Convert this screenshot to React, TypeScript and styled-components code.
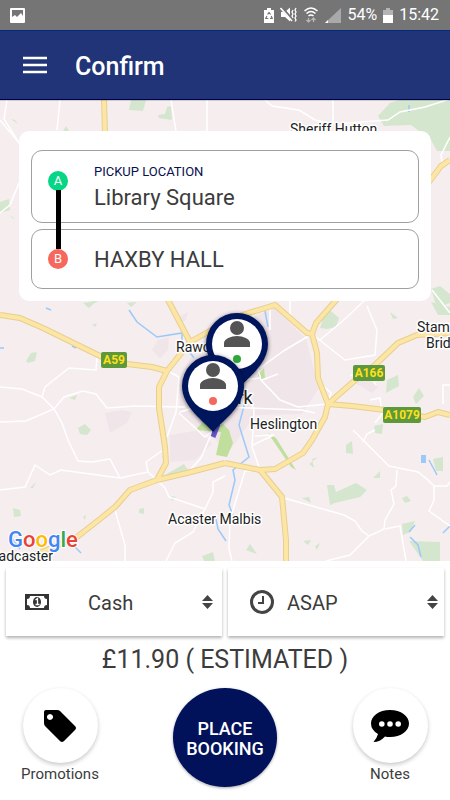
import React from "react";
import styled, { createGlobalStyle } from "styled-components";

const GlobalStyle = createGlobalStyle`
  *, *::before, *::after { box-sizing: border-box; }
  body { margin: 0; background: #fff; font-family: Roboto, "Liberation Sans", sans-serif; color: #3c3c3c; }
  button, select { font-family: inherit; color: inherit; }
`;

const Screen = styled.div`
  display: flex;
  flex-direction: column;
  min-height: 100vh;
`;

const StatusBar = styled.div`
  display: flex;
  align-items: center;
  justify-content: space-between;
  height: 30px;
  padding: 0 11px 0 10px;
  background: #757575;
  color: #fff;
  font-size: 16px;
  line-height: 30px;
`;

const StatusGroup = styled.div`
  display: flex;
  align-items: center;
  gap: 6px;
`;

const Header = styled.header`
  display: flex;
  align-items: center;
  gap: 28px;
  height: 70px;
  padding: 0 23px;
  background: #213478;
  border-top: 1px solid #022a80;
  border-bottom: 1px solid #000052;
  color: #fff;
`;

const MenuButton = styled.button`
  display: flex;
  padding: 0;
  border: 0;
  background: none;
`;

const Title = styled.h1`
  margin: 0;
  padding-top: 3px;
  font-size: 25px;
  line-height: 32px;
  font-weight: 500;
`;

const MapSection = styled.main`
  position: relative;
  flex: 1;
  min-height: 300px;
  padding: 31px 19px;
  background: #f6edef;
  overflow: hidden;
`;

const MapCanvas = styled.svg`
  position: absolute;
  inset: 0;
  width: 100%;
  height: 100%;
`;

const RouteCard = styled.section`
  position: relative;
  display: flex;
  flex-direction: column;
  gap: 6px;
  padding: 19px 12px 12px;
  border-radius: 10px;
  background: #fff;
`;

const RouteStop = styled.button<{ $tall?: boolean }>`
  display: flex;
  align-items: ${(p) => (p.$tall ? "flex-start" : "center")};
  gap: 26px;
  height: ${(p) => (p.$tall ? 73 : 60)}px;
  padding: ${(p) => (p.$tall ? "12px" : "0")} 16px 0;
  border: 1px solid #a0a0a0;
  border-radius: 11px;
  background: #fff;
  text-align: left;
`;

const StopBadge = styled.span<{ $color: string; $linked?: boolean }>`
  position: relative;
  display: flex;
  align-items: center;
  justify-content: center;
  width: 20px;
  height: 20px;
  margin-top: ${(p) => (p.$linked ? 8 : 0)}px;
  border-radius: 50%;
  background: ${(p) => p.$color};
  color: #fff;
  font-size: 13px;
  line-height: 20px;

  &::after {
    content: "";
    display: ${(p) => (p.$linked ? "block" : "none")};
    position: absolute;
    z-index: 1;
    top: 19px;
    left: 8px;
    width: 5px;
    height: 59px;
    background: #000;
  }
`;

const StopText = styled.span`
  display: flex;
  flex-direction: column;
`;

const StopLabel = styled.span`
  color: #08104e;
  font-size: 13px;
  line-height: 18px;
`;

const StopName = styled.span`
  padding-top: 2px;
  font-size: 22px;
  line-height: 30px;
`;

const Options = styled.div`
  display: grid;
  grid-template-columns: 1fr 1fr;
  gap: 6px;
  padding: 7px 6px 0;
`;

const OptionCard = styled.label<{ $gap: number; $inset: number; $end: number }>`
  display: flex;
  align-items: center;
  height: 68px;
  padding: 0 ${(p) => p.$end}px 0 ${(p) => p.$inset}px;
  background: #fff;
  box-shadow: 0 2px 3px rgba(0, 0, 0, 0.3);

  select {
    margin-left: ${(p) => p.$gap}px;
  }
`;

const OptionSelect = styled.select`
  flex: 1;
  min-width: 0;
  height: 100%;
  padding: 2px 0 0;
  border: 0;
  background: none;
  appearance: none;
  font-size: 20px;
`;

const Price = styled.p`
  margin: 0;
  padding-top: 8px;
  font-size: 25px;
  line-height: 32px;
  text-align: center;
`;

const Actions = styled.div`
  display: flex;
  align-items: flex-start;
  justify-content: space-between;
  padding: 12px 15px 13px;
`;

const RoundAction = styled.button`
  display: flex;
  flex-direction: column;
  align-items: center;
  width: 90px;
  padding: 0;
  border: 0;
  background: none;
  font-size: 15px;
  line-height: 22px;
`;

const RoundFace = styled.span`
  display: flex;
  align-items: center;
  justify-content: center;
  width: 75px;
  height: 75px;
  border-radius: 50%;
  background: #fff;
  box-shadow: 0 2px 4px rgba(0, 0, 0, 0.22);
`;

const BookButton = styled.button`
  width: 104px;
  height: 99px;
  padding: 2px 0 0;
  border: 0;
  border-radius: 50%;
  background: #01125b;
  box-shadow: 0 1px 3px rgba(0, 0, 0, 0.35);
  color: #fff;
  font-size: 18px;
  font-weight: 500;
  line-height: 20px;
`;

const StatusIcons = () => (
  <>
    <svg width="10" height="15" viewBox="0 0 10 15" aria-hidden="true">
      <path d="M3 0h4v2h3v13H0V2h3z" fill="#fff" />
      <path d="M3.5 6.5 5 4.5l1.6 2M7.3 8l.9 2.4H6M4.3 10.5H1.8L2.9 8" fill="none" stroke="#757575" strokeWidth="1.2" />
    </svg>
    <svg width="17" height="16" viewBox="0 0 17 16" aria-hidden="true">
      <path d="M1 5h4l5-4.500v14L5 10H1z" fill="#fff" />
      <path d="M1.500 .500 12.500 13" stroke="#757575" strokeWidth="3" />
      <path d="M.500 1 12 14" stroke="#fff" strokeWidth="1.600" />
      <path d="m13 3-1 2 1 2-1 2 1 2M16 1l-1 2 1 2-1 2 1 2-1 2 1 2-1 1.500" fill="none" stroke="#fff" strokeWidth="1.3" />
    </svg>
    <svg width="16" height="16" viewBox="-3 0 16 16" aria-hidden="true">
      <path d="M-1.500 4Q5-2 11.500 4M.5 6.500q4.500-4 9 0M2.500 9Q5 7 7.500 9" fill="none" stroke="#fff" strokeWidth="1.6" />
      <path d="M2.500 15v-4M.500 13l2 2 2-2M7.500 15v-4M5.500 13l2-2 2 2" fill="none" stroke="#bbb" strokeWidth="1.2" />
    </svg>
    <svg width="16" height="15" viewBox="0 0 16 15" aria-hidden="true">
      <path d="M0 15 16 0v15z" fill="#a9a9a9" />
      <path d="m0 15 3-3v3z" fill="#fff" />
    </svg>
  </>
);

const minorRoads = [
  "M7 100 4 119 18 141M60 100 57 130M171 100 176 131M207 100V131M0 213 10 205 19 183M0 120 25 150",
  "M265 100 272 106 299 110 315 120 334 124 388 120 400 112 425 107 450 99M333 100V124",
  "M450 137 441 155 443 168M432 290 450 313",
  "M0 387 22 389 42 397 54 409 62 423 68 440 78 461 92 462 110 459 120 478M42 397 45 387 69 368 96 370 97 358",
  "M0 422 26 421 54 409 64 397 83 391 96 394 107 408 135 406 185 407",
  "M0 490 25 487 35 465 50 475 61 470 120 478 148 472 146 462 163 450",
  "M115 510 125 545 125 561",
  "M168 371 179 377 176 412 167 437M179 413 205 437 225 420M203 405 180 412",
  "M148 472 165 488 169 497 205 509 213 492 213 482 225 476M205 509 193 532 175 543 166 561M213 430 201 458 190 470",
  "M253 315 265 348 225 385M245 320 261 380 280 400 298 407 328 404M225 407 302 410 315 413M242 380 261 378",
  "M312 334 285 350 260 368M312 334 345 360 375 355 377 330 367 306M320 340 345 319 365 300M317 380 331 393 328 404M262 380 278 374",
  "M240 315 235 337M270 308 270 330M290 300 290 319M249 395 254 411 252 447 259 467",
  "M353 430 389 466 418 472 428 480 434 486H447L450 482M363 442 367 434 375 430M397 470 396 486 391 490 394 504 385 520 384 529 369 536 350 555 326 561",
  "M284 498 344 515 355 521 362 531 369 536M385 529 400 526 406 561M434 486V500L429 511 450 526",
  "M260 470 245 471 230 520 229 549 232 561M253 445 274 435 255 436",
  "M370 400 380 398 382 414 375 423M450 385H443V404M350 375 370 374 376 385",
];

const mainRoads = [
  "M104 98 105 135M190 342 168 300 160 285",
  "M0 315 20 318 43 328 100 356 127 364 152 367 167 371 190 342 208 332 242 315 275 305 307 333 312 334 317 353 318 378 328 404 325 417 312 440 303 453 275 469 260 470 225 463",
  "M312 334 316 323 338 298",
  "M167 371 159 387 159 408 165 447 166 463 157 480",
  "M35 555 77 537 100 519 115 507 130 490 157 480 187 473 225 463",
  "M260 470 282 497 286 540 286 563",
  "M328 404 353 382 375 365 398 343 417 335 450 333",
  "M328 404 352 406 385 410 425 417 438 412 450 415",
  "M450 160 441 166 429 182",
];

const woods = [
  "M131 100H146L143 111 129 110zM158 115 165 114 167 107 171 106 172 120 159 118zM63 131 66 126 69 131zM11 119 18 124 15 120z",
  "M378 116 390 103 402 99H450V151H437L431 140 411 125 384 126z",
  "M0 202 9 199 10 210 0 213zM10 215 15 219 12 218zM83 303 100 300 88 307zM127 303 137 302 131 307z",
  "M26 361 31 353 37 352 35 361 28 363zM78 428 85 424 91 430 87 435 80 434zM69 398 77 395 75 400z",
  "M85 305 94 303 89 308zM92 325 97 323 95 327z",
  "M320 328 325 313 331 311 339 318 336 327 327 329z",
  "M390 312 398 318 393 319zM431 302 450 307V315L438 315zM387 380 398 375 399 386 386 393zM413 397 419 388 424 396 416 404zM374 426 383 424 382 434 375 433z",
  "M327 485 334 485 336 492 356 483 367 490 360 497 335 503 330 505z",
  "M402 524 415 521 410 532 403 535zM409 541 440 542V561H423z",
  "M346 445 352 441 353 454 346 453zM309 464 314 468 312 459 318 457zM302 498 309 497 311 503zM402 498 407 496 411 501 405 503zM373 478 380 471 380 478z",
  "M433 459 443 457 443 471 436 471zM303 541 311 540 308 545zM315 546 320 543 317 550zM246 550 250 544 257 554z",
  "M13 508 20 510 21 516 14 517zM48 525 54 516 50 522zM30 488 36 482 33 488zM83 517 86 515 85 520zM139 509 144 508 144 514 139 513z",
  "M79 430 90 430 86 435zM165 475 184 464 188 470 164 480zM202 556 213 552 215 561H204zM431 289 440 286 450 294V303L437 308zM171 496 176 497 172 501z",
];

const Pin = ({ x, y, dot }: { x: number; y: number; dot: string }) => (
  <g transform={`translate(${x} ${y})`}>
    <path d="M0 46C-8 36-31 21-31 0A31 31 0 1 1 31 0C31 21 8 36 0 46z" fill="#00145b" filter="url(#pinShadow)" />
    <circle r="25" fill="#fff" />
    <circle cy="-16" r="7" fill="#545454" />
    <path d="M-13 3V-1C-13-5-6-8 0-8S13-5 13-1V3z" fill="#545454" />
    <circle cy="15" r="4" fill={dot} />
  </g>
);

const RoadSign = ({ x, y, w, name }: { x: number; y: number; w: number; name: string }) => (
  <g>
    <rect x={x} y={y} width={w} height="16" rx="2" fill="#5d993b" />
    <text x={x + w / 2} y={y + 12} textAnchor="middle" fontSize="12" fontWeight="700" fill="#ffdf1b">{name}</text>
  </g>
);

const TownMap = () => (
  <MapCanvas viewBox="0 100 450 461" preserveAspectRatio="xMidYMid slice" role="img" aria-label="Route map">
    <defs>
      <filter id="pinShadow" x="-30%" y="-30%" width="160%" height="160%">
        <feDropShadow dx="0" dy="1" stdDeviation="2" floodOpacity="0.6" />
      </filter>
    </defs>
    <path d="M152 350 158 340 169 337 168 350 160 358zM178 317 188 312 186 320 180 323zM250 318 275 308 306 339 319 388 302 414 255 415 230 450 180 415 179 378 195 350zM105 413 122 410 132 412 127 423 110 433zM170 435 200 430 212 444 195 460 170 462zM355 383 367 379 378 387 372 393z" fill="#f0e6e9" />
    {woods.map((d) => <path key={d} d={d} fill="#d5e6cf" />)}
    <path d="M195 430 204 421 219 420 229 430 233 443 227 457 216 455 221 432zM258 375 264 368 265 378 260 380zM268 433 276 438 296 470 291 467z" fill="#c0df9d" />
    <path d="M129 310 137 322 157 337 182 333 182 342 194 358M245 402 239 425 249 457 233 470 235 480 229 505 234 518M265 311 268 327M216 519 218 529 226 541M10 536 20 549M73 545 81 553M409 532 415 525M410 537 418 545 421 557M429 460 437 475M443 533 450 526M0 348 4 348M409 105V112M72 346 76 348M46 308 51 310" fill="none" stroke="#9bc9fa" strokeWidth="1.500" />
    <path d="M421 455H426V463H421z" fill="#9bc9fa" />
    {minorRoads.map((d) => <path key={d} d={d} fill="none" stroke="#fff" strokeWidth="1.500" />)}
    <g fill="none" strokeLinejoin="round">
      {mainRoads.map((d) => <path key={d} d={d} stroke="#e6cf91" strokeWidth="6" />)}
      {mainRoads.map((d) => <path key={d} d={d} stroke="#fde6a4" strokeWidth="4" />)}
    </g>
    <RoadSign x={101} y={352} w={26} name="A59" />
    <RoadSign x={353} y={365} w={32} name="A166" />
    <RoadSign x={383} y={407} w={38} name="A1079" />
    <g fontSize="14" fill="#222" stroke="#fff" strokeWidth="3" strokeLinejoin="round" paintOrder="stroke">
      <text x="290" y="134">Sheriff Hutton</text>
      <text x="176" y="352">Rawcliffe</text>
      <text x="217" y="404" fontSize="18">York</text>
      <text x="250" y="429">Heslington</text>
      <text x="417" y="332">Stamford</text>
      <text x="426" y="348">Bridge</text>
      <text x="168" y="524">Acaster Malbis</text>
      <text x="-9" y="561">Tadcaster</text>
    </g>
    <path d="M213 437 218 424" stroke="#6557ca" strokeWidth="5" />
    <Pin x={237} y={344} dot="#2fa83a" />
    <Pin x={213} y={386} dot="#f4695c" />
    <text x="8" y="547" fontSize="22" fontWeight="500" stroke="#fff" strokeWidth="2" paintOrder="stroke">
      <tspan fill="#4285f4">G</tspan>
      <tspan fill="#ea4335">o</tspan>
      <tspan fill="#fbbc05">o</tspan>
      <tspan fill="#4285f4">g</tspan>
      <tspan fill="#34a853">l</tspan>
      <tspan fill="#ea4335">e</tspan>
    </text>
    <rect y="100" width="450" height="1" fill="#000" opacity="0.15" />
  </MapCanvas>
);

const SortArrows = () => (
  <svg width="11" height="14" viewBox="0 0 11 14" aria-hidden="true">
    <path d="M0 6 5.500 0 11 6zM0 8h11l-5.500 6z" fill="#444" />
  </svg>
);

export default function App() {
  return (
    <Screen>
      <GlobalStyle />
      <StatusBar>
        <svg width="15" height="15" viewBox="0 0 15 15" aria-hidden="true">
          <path fillRule="evenodd" d="M1 0h13q1 0 1 1v13q0 1-1 1H1q-1 0-1-1V1q0-1 1-1zM2 2v7l3-2 2 2 4-4 2 3V2z" fill="#fff" />
        </svg>
        <StatusGroup>
          <StatusIcons />
          <span>54%</span>
          <svg width="10" height="15" viewBox="0 0 10 15" aria-hidden="true">
            <path d="M3 0h4v2h3v5H0V2h3z" fill="#b4b4b4" />
            <path d="M0 7h10v8H0z" fill="#fff" />
          </svg>
          <span>15:42</span>
        </StatusGroup>
      </StatusBar>
      <Header>
        <MenuButton aria-label="Menu">
          <svg width="24" height="18" viewBox="0 0 24 18" aria-hidden="true">
            <path d="M0 2h24M0 9h24M0 16h24" stroke="#fff" strokeWidth="2.500" />
          </svg>
        </MenuButton>
        <Title>Confirm</Title>
      </Header>
      <MapSection>
        <TownMap />
        <RouteCard>
          <RouteStop $tall>
            <StopBadge $color="#06d685" $linked>A</StopBadge>
            <StopText>
              <StopLabel>PICKUP LOCATION</StopLabel>
              <StopName>Library Square</StopName>
            </StopText>
          </RouteStop>
          <RouteStop>
            <StopBadge $color="#f6685e">B</StopBadge>
            <StopName>HAXBY HALL</StopName>
          </RouteStop>
        </RouteCard>
      </MapSection>
      <Options>
        <OptionCard $inset={19} $gap={39} $end={9}>
          <svg width="24" height="16" viewBox="0 0 24 16" aria-hidden="true">
            <path fillRule="evenodd" d="M0 0h24v16H0zM5 2Q5 5 2 5v6q3 0 3 3h14q0-3 3-3V5q-3 0-3-3z" fill="#333" />
            <ellipse cx="12" cy="8" rx="4" ry="5" fill="#333" />
            <path d="M10.500 6 12.500 4.500V10.500M10.500 10.500h4" fill="none" stroke="#fff" strokeWidth="1.300" />
          </svg>
          <OptionSelect aria-label="Payment method" defaultValue="Cash">
            <option>Cash</option>
          </OptionSelect>
          <SortArrows />
        </OptionCard>
        <OptionCard $inset={22} $gap={13} $end={6}>
          <svg width="24" height="24" viewBox="0 0 24 24" aria-hidden="true">
            <circle cx="12" cy="12" r="10.500" fill="none" stroke="#444" strokeWidth="3" />
            <path d="M13 6v7H8" fill="none" stroke="#444" strokeWidth="2" />
          </svg>
          <OptionSelect aria-label="Pickup time" defaultValue="ASAP">
            <option>ASAP</option>
          </OptionSelect>
          <SortArrows />
        </OptionCard>
      </Options>
      <Price>£11.90 ( ESTIMATED )</Price>
      <Actions>
        <RoundAction>
          <RoundFace>
            <svg width="32" height="32" viewBox="0 0 32 32" aria-hidden="true">
              <path fillRule="evenodd" d="M2 0H13Q15 0 16 1L31 16Q33 18 31 20L20 31Q18 33 16 31L1 16Q0 15 0 13V2Q0 0 2 0zM6 4a3 3 0 1 0 .01 0z" />
            </svg>
          </RoundFace>
          Promotions
        </RoundAction>
        <BookButton>
          PLACE
          <br />
          BOOKING
        </BookButton>
        <RoundAction>
          <RoundFace>
            <svg width="38" height="32" viewBox="0 0 38 32" aria-hidden="true">
              <path d="M19 0C30 0 38 6 38 13.500S30 27 19 27Q16 27 14 26.500 9 32 2.500 32 6 28 7 24 0 20 0 13.500C0 6 8 0 19 0z" />
              <path d="M8 14a2.800 2.800 0 1 0 5.600 0 2.800 2.800 0 1 0-5.600 0M16.200 14a2.800 2.800 0 1 0 5.600 0 2.800 2.800 0 1 0-5.600 0M24.400 14a2.800 2.800 0 1 0 5.600 0 2.800 2.800 0 1 0-5.600 0" fill="#fff" />
            </svg>
          </RoundFace>
          Notes
        </RoundAction>
      </Actions>
    </Screen>
  );
}
